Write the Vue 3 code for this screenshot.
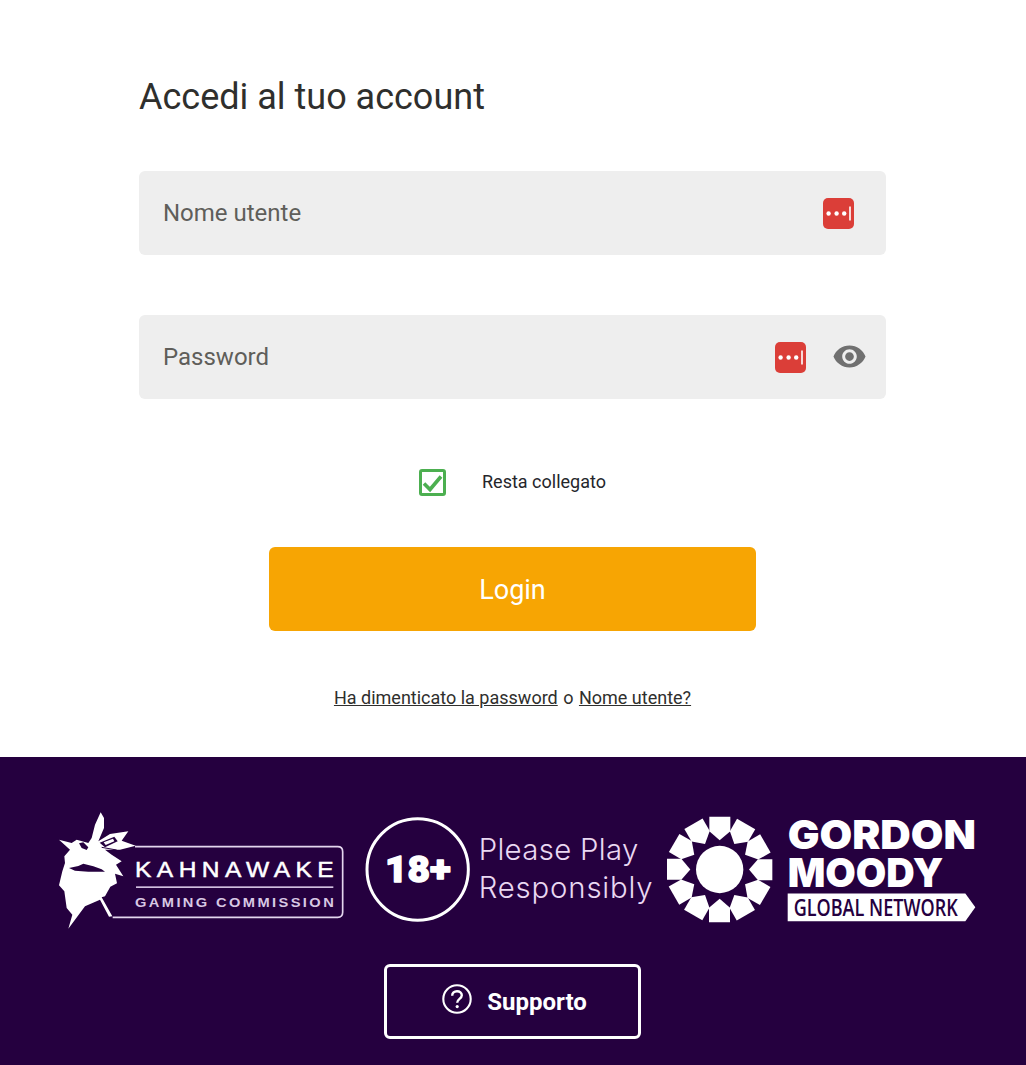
<script setup>
const segments = Array.from({ length: 12 }, (_, i) => i * 30)
</script>

<template>
  <div class="page">
    <main class="login">
      <h1 class="title">Accedi al tuo account</h1>

      <div class="field">
        <input class="input" type="text" placeholder="Nome utente" />
        <span class="lp lp-user">
          <svg viewBox="0 0 31 31" width="31" height="31">
            <rect width="31" height="31" rx="5" fill="#db3e38" />
            <circle cx="5.6" cy="15.5" r="2.2" fill="#fff" />
            <circle cx="13.6" cy="15.5" r="2.2" fill="#fff" />
            <circle cx="21.2" cy="15.5" r="2.2" fill="#fff" />
            <rect x="26.2" y="8.5" width="1.6" height="14" fill="#fff" />
          </svg>
        </span>
      </div>

      <div class="field field-second">
        <input class="input" type="password" placeholder="Password" />
        <span class="lp lp-pass">
          <svg viewBox="0 0 31 31" width="31" height="31">
            <rect width="31" height="31" rx="5" fill="#db3e38" />
            <circle cx="5.6" cy="15.5" r="2.2" fill="#fff" />
            <circle cx="13.6" cy="15.5" r="2.2" fill="#fff" />
            <circle cx="21.2" cy="15.5" r="2.2" fill="#fff" />
            <rect x="26.2" y="8.5" width="1.6" height="14" fill="#fff" />
          </svg>
        </span>
        <svg class="eye" viewBox="0 0 24 24" width="35" height="35">
          <path fill="#707070" d="M12 4.5C7 4.5 2.73 7.61 1 12c1.73 4.39 6 7.5 11 7.5s9.27-3.11 11-7.5c-1.73-4.39-6-7.5-11-7.5zM12 17c-2.76 0-5-2.24-5-5s2.24-5 5-5 5 2.24 5 5-2.24 5-5 5zm0-8c-1.66 0-3 1.34-3 3s1.34 3 3 3 3-1.34 3-3-1.34-3-3-3z" />
        </svg>
      </div>

      <label class="remember">
        <span class="check">
          <svg viewBox="0 0 21 21" width="21" height="21">
            <path d="M2 11.5l6 6L19 4.5" fill="none" stroke="#4caf50" stroke-width="3.6" />
          </svg>
        </span>
        <span class="remember-text">Resta collegato</span>
      </label>

      <button class="login-btn" type="button">Login</button>

      <p class="links">
        <a href="#">Ha dimenticato la password</a> <span class="or">o</span> <a href="#">Nome utente?</a>
      </p>
    </main>

    <footer class="footer">
      <div class="logos">
        <svg class="logo-kgc" viewBox="54 27 870 366" width="290" height="122">
          <g transform="translate(45 24)">
            <path fill="#fff" d="M137 13L147 30L147 60L130 100L165 78L220 70L200 98L242 113L195 125L150 125L170 140L200 160L183 170L205 205L180 197L186 226L166 236L150 265L140 268L172 325L162 326L135 275L90 295L40 362L52 320L35 300L28 250L12 232L22 190L30 165L28 145L45 125L12 95L50 105L65 95L100 105L110 90L120 50Z" />
            <path fill="#25003f" d="M42 180L70 174L85 167L115 175L140 184L150 191L100 191L60 188Z" />
            <path fill="#25003f" d="M72 106L85 103L100 118L95 126L80 120Z" />
            <path fill="#25003f" d="M134 104L178 86L188 100L150 118Z" />
            <path fill="#fff" d="M146 103L174 92L178 100L152 111Z" />
            <path fill="none" stroke="#25003f" stroke-width="3" d="M140 118L185 126" />
          </g>
          <path fill="none" stroke="#e4d6ee" stroke-width="5" d="M285 140H893Q908 140 908 155V337Q908 352 893 352H218" />
          <text class="kgc-a" transform="translate(285 232) scale(1.1 1)" textLength="542">KAHNAWAKE</text>
          <rect x="288" y="259" width="592" height="5" fill="#d2bfe0" />
          <text class="kgc-b" transform="translate(285 320) scale(1.1 1)" textLength="542">GAMING COMMISSION</text>
        </svg>

        <svg class="logo-play" viewBox="15 50 870 320" width="290" height="107">
          <circle cx="173" cy="207" r="152" fill="none" stroke="#fff" stroke-width="9" />
          <text class="age" x="75" y="245" textLength="197" lengthAdjust="spacingAndGlyphs">18+</text>
          <text class="play" x="356" y="177" textLength="479">Please Play</text>
          <text class="play" x="356" y="291" textLength="522">Responsibly</text>
        </svg>

        <svg class="logo-gm" viewBox="20 50 960 323" width="320" height="108">
          <g fill="#fff">
            <circle cx="181" cy="210" r="71" />
            <polygon
              v-for="a in segments"
              :key="a"
              points="150,52 213,52 213,95 181,122 150,95"
              :transform="`rotate(${a} 181 210)`"
            />
          </g>
          <text class="gm" x="385" y="148" textLength="565" lengthAdjust="spacingAndGlyphs">GORDON</text>
          <text class="gm" x="385" y="262" textLength="467" lengthAdjust="spacingAndGlyphs">MOODY</text>
          <polygon points="385,282 918,282 948,323 918,365 385,365" fill="#fff" />
          <text class="gm-tag" transform="translate(403 350) scale(.8 1)" textLength="615" lengthAdjust="spacingAndGlyphs">GLOBAL NETWORK</text>
        </svg>
      </div>

      <a class="support" href="#">
        <svg class="support-icon" viewBox="0 0 30 30" width="30" height="30">
          <circle cx="15" cy="15" r="13.7" fill="none" stroke="#fff" stroke-width="2.1" />
          <path d="M10.2 11.8c0-2.8 2-4.6 4.8-4.6s4.8 1.7 4.8 4.1c0 3.6-4.6 3.6-4.6 7.4" fill="none" stroke="#fff" stroke-width="2.4" />
          <circle cx="15.2" cy="22.6" r="1.6" fill="#fff" />
        </svg>
        <span class="support-text">Supporto</span>
      </a>
    </footer>
  </div>
</template>

<style>
html, body { margin: 0; background: #fff; }
</style>

<style scoped>
.page {
  width: 1026px;
  height: 1065px;
  display: flex;
  flex-direction: column;
  font-family: Roboto, "Liberation Sans", sans-serif;
  overflow: hidden;
}
.login {
  height: 757px;
  box-sizing: border-box;
  padding: 75px 140px 0 139px;
  display: flex;
  flex-direction: column;
}
.title {
  margin: 0 0 52px;
  font-size: 36px;
  line-height: 44px;
  font-weight: 400;
  color: #2f2f2d;
}
.field {
  position: relative;
  height: 84px;
}
.field-second { margin-top: 60px; }
.input {
  width: 100%;
  height: 100%;
  box-sizing: border-box;
  border: 0;
  border-radius: 6px;
  background: #eeeeee;
  padding: 0 24px;
  font: 400 24px Roboto, sans-serif;
  outline: none;
}
.input::placeholder { color: #5f5e5a; opacity: 1; }
.lp { position: absolute; top: 27px; width: 31px; height: 31px; }
.lp svg, .check svg { display: block; }
.lp-user { right: 32px; }
.lp-pass { right: 80px; }
.eye { position: absolute; right: 19px; top: 24px; }
.remember {
  margin-top: 70px;
  margin-left: 280px;
  display: flex;
  align-items: center;
  height: 27px;
}
.check {
  width: 27px;
  height: 27px;
  box-sizing: border-box;
  border: 3px solid #4caf50;
  border-radius: 3px;
}
.remember-text {
  margin: 0 0 2px 36px;
  font-size: 18px;
  color: #25262b;
}
.login-btn {
  margin: 51px 0 0 130px;
  padding: 2px 0 0;
  width: 487px;
  height: 84px;
  border: 0;
  border-radius: 6px;
  background: #f7a503;
  color: #fff;
  font: 400 27px Roboto, sans-serif;
}
.links {
  margin: 55px 0 0;
  text-align: center;
  font-size: 18px;
  line-height: 24px;
  color: #2f2f2d;
}
.links a { color: #2f2f2d; text-decoration: underline; }
.or { padding: 0 1px; }
.footer {
  flex: 1;
  background: #25003f;
  display: flex;
  flex-direction: column;
  align-items: center;
  padding-top: 52px;
  box-sizing: border-box;
}
.logos {
  width: 100%;
  height: 122px;
  box-sizing: border-box;
  padding-left: 58px;
  display: flex;
  align-items: flex-start;
  color: #fff;
}
.logo-play { margin: 8px 0 0 17px; }
.logo-gm { margin: 7px 0 0 11px; }
.kgc-a {
  font: 400 67px "Liberation Sans", sans-serif;
  fill: #fff;
  stroke: #fff;
  stroke-width: 1.4px;
}
.kgc-b {
  font: 700 40px "Liberation Sans", sans-serif;
  fill: #d8c8e4;
}
.age {
  font: 900 110px Roboto, sans-serif;
  fill: #fff;
  stroke: #fff;
  stroke-width: 4px;
  stroke-linejoin: round;
}
.play {
  font: 300 88px Inter, Lato, sans-serif;
  fill: #ead8f2;
}
.gm {
  font: 900 121px Inter, Roboto, sans-serif;
  fill: #fff;
}
.gm-tag {
  font: 600 68px "Open Sans", sans-serif;
  fill: #25003f;
}
.support {
  margin-top: 33px;
  margin-left: -1px;
  padding-left: 4px;
  width: 257px;
  height: 75px;
  box-sizing: border-box;
  border: 3px solid #fff;
  border-radius: 6px;
  display: flex;
  align-items: center;
  justify-content: center;
  gap: 15px;
  color: #fff;
  font-size: 24px;
  font-weight: 700;
  text-decoration: none;
}
.support-icon { margin-bottom: 5px; }
.support-text { margin-top: 1px; }
</style>
